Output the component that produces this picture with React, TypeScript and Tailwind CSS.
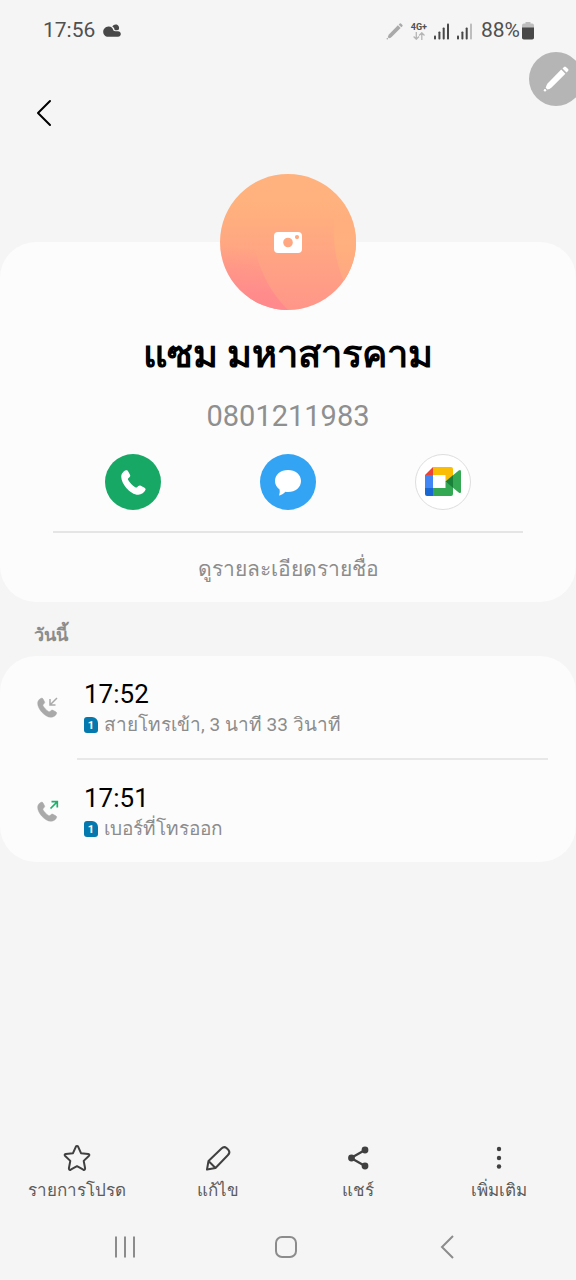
import type { ReactNode } from "react";

type CallEntry = {
  time: string;
  detail: string;
  direction: "in" | "out";
};

const calls: CallEntry[] = [
  { time: "17:52", detail: "สายโทรเข้า, 3 นาที 33 วินาที", direction: "in" },
  { time: "17:51", detail: "เบอร์ที่โทรออก", direction: "out" },
];

function PencilGlyph({ className }: { className: string }) {
  return (
    <svg viewBox="0 0 26 26" fill="currentColor" className={className} aria-hidden="true">
      <path d="M18.2 3.6 22.4 7.8 8.6 21.4Q6.5 23.2 4.4 23.4L2.7 21.7Q3.1 19.3 4.8 17.2Z" />
      <circle cx="2" cy="24.2" r="1.2" />
      <path d="M19.5 2.5 21 .9Q21.9 0 22.9.9L25.1 3.1Q25.9 4 25.1 4.900L23.500 6.500Z" />
    </svg>
  );
}

function SignalBars({ weak = false }: { weak?: boolean }) {
  return (
    <svg viewBox="0 0 16 17" className="h-[17px] w-4" aria-hidden="true">
      <g fill="#484848">
        <rect x="0" y="12.5" width="2" height="4" rx=".8" />
        <rect x="4.4" y="8.5" width="2" height="8" rx=".8" />
        <rect x="8.7" y="4.5" width="2" height="12" rx=".8" />
        <rect x="13" y="0.5" width="2" height="16" rx=".8" fill={weak ? "#bdbdbd" : "#484848"} />
      </g>
    </svg>
  );
}

function StatusBar() {
  return (
    <div className="flex h-[60px] items-center justify-between pl-[43px] pr-[42px] pt-0.5 text-[21px] text-[#505050]">
      <div className="flex items-center gap-2">
        <span>17:56</span>
        <svg viewBox="0 0 18 14" className="h-3.5 w-[18px]" fill="#484848" aria-hidden="true">
          <path d="M5.4 2.4C8 2.2 9.8 3.9 10.3 6.3 11 7.3 12.3 7.4 15 7.3 16.6 7.3 17.8 8.5 17.8 10S16.6 12.8 15 12.8H5.2C2.2 12.8.2 10.5.2 7.7S2.4 2.5 5.4 2.4Z" />
          <path d="M9.3 2.5C10.4.7 12.2 0 13.7.6 15.5 1.2 16.4 3 16 5.3 15.3 6.2 13.8 6.5 11.6 6 11.6 4.6 10.8 3.2 9.3 2.5Z" />
        </svg>
      </div>
      <div className="flex items-center">
        <PencilGlyph className="mr-2 h-[17px] w-[17px] text-[#a9a9a9]" />
        <div className="mr-[7px] flex flex-col items-center">
          <span className="text-[9px] font-bold leading-[9px]">4G+</span>
          <svg viewBox="0 0 12 8" className="h-2 w-3" fill="none" stroke="#b5b5b5" strokeWidth="1.3" aria-hidden="true">
            <path d="M3.3 0V7M.6 4.5 3.3 7.2 6 4.5M8.8 8V1M6.1 3.5 8.8.8 11.5 3.5" />
          </svg>
        </div>
        <SignalBars />
        <div className="w-[7px]" />
        <SignalBars weak />
        <span className="ml-2">88%</span>
        <svg viewBox="0 0 12 18" className="ml-0.5 h-[18px] w-3" aria-hidden="true">
          <path d="M3.5 0h5v1.6h1.7q1.8 0 1.8 1.8V6H0V3.4Q0 1.6 1.8 1.6h1.7z" fill="#bdbdbd" />
          <path d="M0 5.6h12V15.7q0 1.8-1.8 1.8H1.8Q0 17.5 0 15.7z" fill="#484848" />
        </svg>
      </div>
    </div>
  );
}

function Avatar() {
  return (
    <button type="button" aria-label="เปลี่ยนรูปภาพ" className="mx-auto -mt-[68px] block h-[136px] w-[136px] overflow-hidden rounded-full">
      <svg viewBox="0 0 136 136" className="h-full w-full">
        <defs>
          <linearGradient id="avatar-base" x1="0" y1="0" x2="0" y2="1">
            <stop offset="0.2" stopColor="#ffb27d" />
            <stop offset="1" stopColor="#ff9689" />
          </linearGradient>
          <linearGradient id="avatar-left" gradientUnits="userSpaceOnUse" x1="42" y1="76" x2="34" y2="136">
            <stop offset="0" stopColor="#ff888d" stopOpacity="0" />
            <stop offset="0.7" stopColor="#ff888d" stopOpacity="0.75" />
            <stop offset="1" stopColor="#ff888d" />
          </linearGradient>
          <linearGradient id="avatar-right" x1="0" y1="0" x2="0" y2="1">
            <stop offset="0" stopColor="#ffb27d" stopOpacity="0" />
            <stop offset="0.5" stopColor="#ffb07e" />
            <stop offset="1" stopColor="#ffa782" />
          </linearGradient>
        </defs>
        <rect width="136" height="136" fill="url(#avatar-base)" />
        <path d="M0 0H36C26 50 32 100 68 136H0Z" fill="url(#avatar-left)" />
        <path d="M117 28C111 52 113 82 124 108H136V28Z" fill="url(#avatar-right)" />
        <path
          fill="#fff"
          fillRule="evenodd"
          d="M58 58H78Q82 58 82 62V75Q82 79 78 79H58Q54 79 54 75V62Q54 58 58 58ZM68 63.7A4.8 4.8 0 1 0 68 73.3A4.8 4.8 0 1 0 68 63.7ZM77 61A2.1 2.1 0 1 0 77 65.2A2.1 2.1 0 1 0 77 61Z"
        />
      </svg>
    </button>
  );
}

function HandsetPath() {
  return (
    <path d="M1 3.6C2.1 1.8 3.7.4 5.1.2 6.1 0 6.7.5 7.2 1.4L9 4.7C9.5 5.7 9.2 6.5 8.4 7.2L7.3 8.2C6.8 8.7 6.8 9.4 7.2 10.1 8.8 12.8 11.3 15.5 14.2 17.3 15 17.8 15.7 17.7 16.3 17.1L17.3 16.1C18 15.4 18.9 15.2 19.8 15.7L23.5 17.7C24.5 18.3 24.8 19.1 24.4 20.1 23.3 22.7 20.5 24.6 17.3 24.7 13.4 24.8 8.6 21.7 5.3 17.9 1.6 13.7-1.2 7.5 1 3.6Z" />
  );
}

function MeetLogo() {
  return (
    <svg viewBox="0 0 36 30" className="h-[30px] w-9" aria-hidden="true">
      <path d="M8 0 0 8H8Z" fill="#ea4335" />
      <path d="M0 8H8V21H0Z" fill="#4285f4" />
      <path d="M0 21H8V29H2Q0 29 0 27Z" fill="#1967d2" />
      <path d="M8 0H26Q28 0 28 2V9L20.5 14.5V8H8Z" fill="#fbbc04" />
      <path d="M8 21H20.5V14.5L28 20V27Q28 29 26 29H8Z" fill="#34a853" />
      <path d="M20.5 14.5 33.7 3.5Q36 2 36 4.5V24.5Q36 27 33.7 25.5Z" fill="#34a853" />
      <path d="M20.5 14.5 28 8.3V20.7Z" fill="#188038" />
    </svg>
  );
}

function SimBadge() {
  return (
    <span className="flex h-4 w-3.5 shrink-0 items-center justify-center rounded-[3px] rounded-tr-md bg-[#0579ae] text-[11px] font-bold leading-none text-white">
      1
    </span>
  );
}

function CallIcon({ direction }: { direction: CallEntry["direction"] }) {
  return (
    <svg viewBox="0 0 22 22" className="h-[22px] w-[22px] shrink-0" aria-hidden="true">
      <g fill="#a9a9a9" stroke="#a9a9a9" strokeWidth=".6" transform="translate(.5 2) scale(.78)">
        <HandsetPath />
      </g>
      {direction === "in" ? (
        <path d="M20 2 13.5 8.5M13 3V8.9H18.5" fill="none" stroke="#a9a9a9" strokeWidth="1.5" />
      ) : (
        <path d="M13.5 8.5 20 2M14.5 1.7H20.3V7.5" fill="none" stroke="#1fae6c" strokeWidth="1.7" />
      )}
    </svg>
  );
}

function BarAction({ label, children }: { label: string; children: ReactNode }) {
  return (
    <button type="button" className="flex flex-col items-center">
      <svg viewBox="0 0 28 28" className="h-7 w-7" fill="none" stroke="#404040" strokeWidth="2" strokeLinejoin="round" strokeLinecap="round" aria-hidden="true">
        {children}
      </svg>
      <span className="mt-1 whitespace-nowrap text-[17px] leading-7 text-[#5c5c5c]">{label}</span>
    </button>
  );
}

export default function App() {
  return (
    <div className="relative flex min-h-screen flex-col overflow-hidden bg-[#f5f5f5] font-[Roboto,sans-serif]">
      <StatusBar />

      <button
        type="button"
        aria-label="เครื่องมือแก้ไข"
        className="absolute -right-[7px] top-[52px] flex h-[54px] w-[54px] items-center justify-center rounded-full bg-[#b5b5b5] text-white"
      >
        <PencilGlyph className="h-[26px] w-[26px]" />
      </button>

      <header className="h-[182px] px-7 pt-9">
        <button type="button" aria-label="ย้อนกลับ" className="flex h-[34px] w-8 items-center justify-center">
          <svg viewBox="0 0 16 28" className="h-7 w-4" fill="none" stroke="#000" strokeWidth="2" strokeLinecap="round" strokeLinejoin="round">
            <path d="M14 2 2 14 14 26" />
          </svg>
        </button>
      </header>

      <main>
        <section className="flex flex-col rounded-[36px] bg-[#fcfcfc] pb-3">
          <Avatar />
          <h1 className="mt-5 text-center text-[38px] font-bold leading-[48px] text-black">แซม มหาสารคาม</h1>
          <p className="mt-5 text-center text-[29px] leading-9 text-[#8f8f8f]">0801211983</p>

          <div className="mt-5 grid grid-cols-3 justify-items-center px-14">
            <button type="button" aria-label="โทร" className="flex h-14 w-14 items-center justify-center rounded-full bg-[#17a866]">
              <svg viewBox="0 0 25 25" className="h-[25px] w-[25px]" fill="#fff">
                <HandsetPath />
              </svg>
            </button>
            <button type="button" aria-label="ข้อความ" className="flex h-14 w-14 items-center justify-center rounded-full bg-[#33a3f3]">
              <svg viewBox="0 0 28 28" className="h-7 w-7" fill="#fff">
                <path d="M14 2C21.5 2 27 6.6 27 13S21.5 24 14 24Q12.8 24 11.5 23.8 9 26.5 5.7 27.6 5 27.7 5.2 27 6.2 24.5 5.6 21.5C2.7 19.5 1 16.6 1 13 1 6.6 6.5 2 14 2Z" />
              </svg>
            </button>
            <button type="button" aria-label="Google Meet" className="flex h-14 w-14 items-center justify-center rounded-full border border-[#dedede] bg-white">
              <MeetLogo />
            </button>
          </div>

          <div className="mx-[53px] mt-[21px] border-t-2 border-[#e5e5e5] pt-4 text-center">
            <button type="button" className="text-[21px] leading-[41px] text-[#8c8c8c]">
              ดูรายละเอียดรายชื่อ
            </button>
          </div>
        </section>

        <h2 className="flex h-[54px] items-center px-[34px] pt-3 text-lg font-bold leading-7 text-[#8c8c8c]">วันนี้</h2>

        <ul className="rounded-[36px] bg-[#fcfcfc]">
          {calls.map((call, i) => (
            <li key={call.time}>
              {i > 0 && <div className="ml-[77px] mr-7 h-0.5 bg-[#e8e8e8]" />}
              <div className="flex h-[102px] items-center pl-[37px] pr-7">
                <CallIcon direction={call.direction} />
                <div className="ml-[25px] pt-1">
                  <p className="text-[26px] leading-8 text-black">{call.time}</p>
                  <p className="flex items-center gap-1.5 text-[19px] leading-[30px] text-[#8c8c8c]">
                    <SimBadge />
                    {call.detail}
                  </p>
                </div>
              </div>
            </li>
          ))}
        </ul>
      </main>

      <footer className="mt-auto">
        <div className="grid grid-cols-4 px-[7px]">
          <BarAction label="รายการโปรด">
            <path d="M14 2Q14.8 2 15.2 2.8L18 9.2 25.2 10Q27.2 10.5 25.8 12L20.7 16.9 22.1 24.3Q22.1 26.4 20.3 25.7L14 22.2 7.7 25.7Q5.9 26.4 5.9 24.3L7.3 16.9 2.2 12Q.8 10.5 2.8 10L10 9.2 12.8 2.8Q13.2 2 14 2Z" />
          </BarAction>
          <BarAction label="แก้ไข">
            <path d="M3 25.5 4.5 17 17.5 4.5Q20 2 22.500 4L24.500 6Q26.500 8.500 24 11L11.500 24ZM4.500 17 11.500 24" />
          </BarAction>
          <BarAction label="แชร์">
            <path d="M21 6 7 14 21 22" strokeWidth="2.3" />
            <g fill="#404040" stroke="none">
              <circle cx="21" cy="6" r="3.4" />
              <circle cx="7.5" cy="14" r="3.4" />
              <circle cx="21" cy="22" r="3.4" />
            </g>
          </BarAction>
          <BarAction label="เพิ่มเติม">
            <g fill="#404040" stroke="none">
              <circle cx="14" cy="5" r="2.2" />
              <circle cx="14" cy="14" r="2.2" />
              <circle cx="14" cy="22.5" r="2.2" />
            </g>
          </BarAction>
        </div>

        <nav className="mt-2.5 grid h-[66px] grid-cols-3 items-center justify-items-center pl-11 pr-12">
          <button type="button" aria-label="แอปล่าสุด">
            <svg viewBox="0 0 24 24" className="h-6 w-6" stroke="#8c8c8c" strokeWidth="2">
              <path d="M3 1.5V22.5M12 1.5V22.5M21 1.5V22.5" />
            </svg>
          </button>
          <button type="button" aria-label="หน้าหลัก">
            <svg viewBox="0 0 24 24" className="h-6 w-6" fill="none" stroke="#8c8c8c" strokeWidth="2">
              <rect x="2" y="2" width="20" height="20" rx="6" />
            </svg>
          </button>
          <button type="button" aria-label="กลับ">
            <svg viewBox="0 0 24 24" className="h-6 w-6" fill="none" stroke="#8c8c8c" strokeWidth="2">
              <path d="M18 1 7 12 18 23" />
            </svg>
          </button>
        </nav>
      </footer>
    </div>
  );
}
